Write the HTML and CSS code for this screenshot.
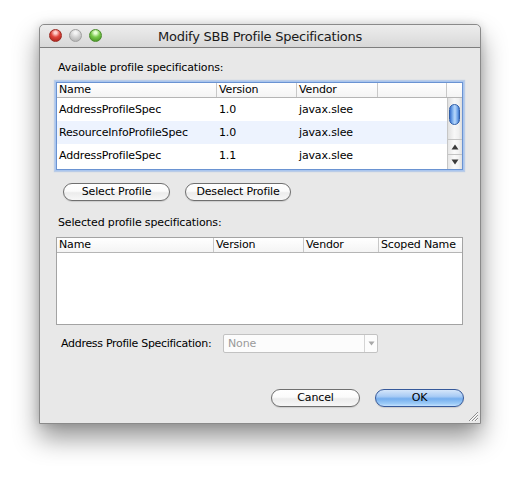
FILE: index.html
```html
<!DOCTYPE html>
<html>
<head>
<meta charset="utf-8">
<link rel="stylesheet" href="styles.css">
</head>
<body>
<div class="window">
  <div class="titlebar">
    <div class="lights">
      <span class="light red"></span>
      <span class="light gray"></span>
      <span class="light green"></span>
    </div>
    <div class="title">Modify SBB Profile Specifications</div>
  </div>
  <div class="content">
    <div class="label first">Available profile specifications:</div>
    <div class="table focused">
      <div class="thead cols1">
        <div class="th">Name</div>
        <div class="th">Version</div>
        <div class="th">Vendor</div>
        <div class="th"></div>
        <div class="th last"></div>
      </div>
      <div class="tbody">
        <div class="rows">
          <div class="tr cols1b"><div class="td">AddressProfileSpec</div><div class="td">1.0</div><div class="td">javax.slee</div><div class="td"></div></div>
          <div class="tr alt cols1b"><div class="td">ResourceInfoProfileSpec</div><div class="td">1.0</div><div class="td">javax.slee</div><div class="td"></div></div>
          <div class="tr cols1b"><div class="td">AddressProfileSpec</div><div class="td">1.1</div><div class="td">javax.slee</div><div class="td"></div></div>
        </div>
        <div class="vscroll">
          <div class="track"><div class="thumb"></div></div>
          <div class="arrow up">
            <svg width="8" height="6" viewBox="0 0 8 6"><path d="M4 0.5 L7.5 5.5 L0.5 5.5 Z" fill="#3a3a3a"/></svg>
          </div>
          <div class="arrow down">
            <svg width="8" height="6" viewBox="0 0 8 6"><path d="M0.5 0.5 L7.5 0.5 L4 5.5 Z" fill="#3a3a3a"/></svg>
          </div>
        </div>
      </div>
    </div>
    <div class="btnrow">
      <button class="btn w-select">Select Profile</button>
      <button class="btn w-deselect">Deselect Profile</button>
    </div>
    <div class="label second">Selected profile specifications:</div>
    <div class="table plain">
      <div class="thead cols2">
        <div class="th">Name</div>
        <div class="th">Version</div>
        <div class="th">Vendor</div>
        <div class="th last">Scoped Name</div>
      </div>
      <div class="tbody empty"></div>
    </div>
    <div class="addr-row">
      <div class="addr-label">Address Profile Specification:</div>
      <div class="combo">
        <span class="combo-text">None</span>
        <span class="combo-btn">
          <svg width="7" height="5" viewBox="0 0 7 5"><path d="M0.5 0.5 L6.5 0.5 L3.5 4.5 Z" fill="#a8a8a8"/></svg>
        </span>
      </div>
    </div>
    <div class="footer">
      <button class="btn w-cancel">Cancel</button>
      <button class="btn default w-ok">OK</button>
    </div>
  </div>
  <svg class="grip" width="11" height="11" viewBox="0 0 11 11">
    <path d="M10 1 L1 10 M10 4 L4 10 M10 7 L7 10" stroke="#8d8d8d" stroke-width="1"/>
    <path d="M10 2 L2 10 M10 5 L5 10 M10 8 L8 10" stroke="#fbfbfb" stroke-width="1"/>
  </svg>
</div>
</body>
</html>
```

FILE: styles.css
```css
html, body {
  margin: 0;
  padding: 0;
  background: #ffffff;
}
body {
  font-family: "DejaVu Sans", "Liberation Sans", sans-serif;
  font-size: 11px;
  letter-spacing: -0.15px;
  color: #000;
  width: 520px;
  height: 479px;
  overflow: hidden;
}
.window {
  position: relative;
  margin: 24px 0 0 39px;
  width: 440px;
  height: 398px;
  border: 1px solid #8a8a8a;
  border-radius: 5px 5px 0 0;
  background: #e8e8e8;
  box-shadow: 0 14px 26px rgba(0,0,0,0.42), 0 0 10px rgba(0,0,0,0.14);
}
.titlebar {
  position: relative;
  height: 22px;
  border-bottom: 1px solid #7e7e7e;
  border-radius: 5px 5px 0 0;
  background: linear-gradient(#ededed, #d8d8d8);
  display: flex;
  align-items: center;
  justify-content: center;
}
.lights {
  position: absolute;
  left: 9px;
  top: 4px;
  display: flex;
  gap: 7px;
}
.light {
  width: 13px;
  height: 13px;
  border-radius: 50%;
  box-sizing: border-box;
}
.red {
  background: radial-gradient(circle at 50% 25%, #ffd0cc 0 12%, #e0443b 45%, #a01c14 100%);
  border: 1px solid #9b2a22;
}
.gray {
  background: radial-gradient(circle at 50% 25%, #f4f4f4 0 12%, #cfcfcf 50%, #a9a9a9 100%);
  border: 1px solid #a0a0a0;
}
.green {
  background: radial-gradient(circle at 50% 25%, #e6ffd2 0 12%, #78c94a 45%, #3d8a1a 100%);
  border: 1px solid #4a8b2c;
}
.title {
  font-size: 13px;
  color: #1a1a1a;
  letter-spacing: -0.25px;
  padding-top: 1px;
}
.content {
  padding: 0 17px 0 16px;
}
.label {
  line-height: 14px;
  height: 14px;
  padding-left: 2px;
}
.label.first { margin-top: 13px; }
.label.second { margin-top: 15px; }
.table {
  margin-top: 7px;
  width: 405px;
  border: 1px solid #a3a3a3;
  background: #fff;
}
.table.focused {
  border-color: #6a93d2;
  box-shadow: 0 0 0 1px #a9c5ee, 0 0 1px 2px rgba(140,175,230,0.5);
}
.thead {
  display: grid;
  height: 14px;
  border-bottom: 1px solid #b5b5b5;
  background: linear-gradient(#ffffff, #f4f4f4);
}
.cols1 { grid-template-columns: 160px 80px 81px 69px 1fr; }
.cols1b { grid-template-columns: 160px 80px 81px 69px; }
.cols2 { grid-template-columns: 157px 90px 75px 1fr; }
.th {
  border-right: 1px solid #c8c8c8;
  line-height: 14px;
  padding-left: 2px;
  white-space: nowrap;
  overflow: hidden;
}
.th.last { border-right: none; }
.tbody {
  display: flex;
  height: 71px;
  overflow: hidden;
}
.tbody.empty { height: 71px; }
.rows { flex: 1; }
.tr {
  display: grid;
  height: 23px;
  align-items: center;
}
.tr.alt { background: #edf3fe; }
.td {
  padding-left: 2px;
  white-space: nowrap;
  overflow: hidden;
}
.vscroll {
  width: 14px;
  border-left: 1px solid #c6c6c6;
  display: flex;
  flex-direction: column;
}
.track {
  flex: 1;
  padding-top: 6px;
  background: linear-gradient(to right, #e0e0e0, #f8f8f8 45%, #f0f0f0 75%, #dcdcdc);
}
.thumb {
  margin-left: 1px;
  width: 11px;
  height: 21px;
  box-sizing: border-box;
  border-radius: 6px;
  border: 1px solid #2f5ea8;
  background: linear-gradient(to right, #3a72cf, #8dbcf3 35%, #b9d8fb 55%, #6a9fe6 85%, #3f74c9);
}
.arrow {
  height: 15px;
  display: flex;
  align-items: center;
  justify-content: center;
  border-top: 1px solid #c4c4c4;
  box-sizing: border-box;
  background: linear-gradient(to right, #e6e6e6, #fbfbfb 45%, #f2f2f2 75%, #e0e0e0);
}
.btnrow {
  display: flex;
  gap: 15px;
  margin-top: 13px;
  padding-left: 7px;
}
.btn {
  height: 18px;
  box-sizing: border-box;
  border: 1px solid #6f6f6f;
  border-radius: 9px;
  background: linear-gradient(#ffffff, #fbfbfb 45%, #ececec 55%, #f7f7f7);
  font-family: "DejaVu Sans", "Liberation Sans", sans-serif;
  font-size: 11px;
  letter-spacing: -0.15px;
  color: #000;
  padding: 0;
  line-height: 16px;
  box-shadow: 0 1px 1px rgba(0,0,0,0.12);
}
.w-select { width: 107px; }
.w-deselect { width: 106px; }
.w-cancel { width: 89px; }
.w-ok { width: 89px; }
.btn.default {
  border-color: #36599a;
  background: linear-gradient(#d5e6fa, #a8cbf5 40%, #75aeee 55%, #9ccbf7 85%, #c4e2ff);
}
.addr-row {
  display: flex;
  align-items: center;
  margin-top: 9px;
  height: 19px;
}
.addr-label {
  flex: none;
  width: 167px;
  padding-left: 5px;
  box-sizing: border-box;
  white-space: nowrap;
  letter-spacing: -0.3px;
}
.combo {
  width: 155px;
  height: 19px;
  box-sizing: border-box;
  border: 1px solid #c2c2c2;
  border-radius: 2px;
  background: #fcfcfc;
  display: flex;
  align-items: center;
}
.combo-text {
  flex: 1;
  color: #9a9a9a;
  padding-left: 4px;
}
.combo-btn {
  width: 12px;
  height: 17px;
  border-left: 1px solid #d4d4d4;
  display: flex;
  align-items: center;
  justify-content: center;
}
.footer {
  display: flex;
  justify-content: flex-end;
  gap: 15px;
  margin-top: 36px;
  margin-right: -1px;
}
.grip {
  position: absolute;
  right: 1px;
  bottom: 1px;
}
```
